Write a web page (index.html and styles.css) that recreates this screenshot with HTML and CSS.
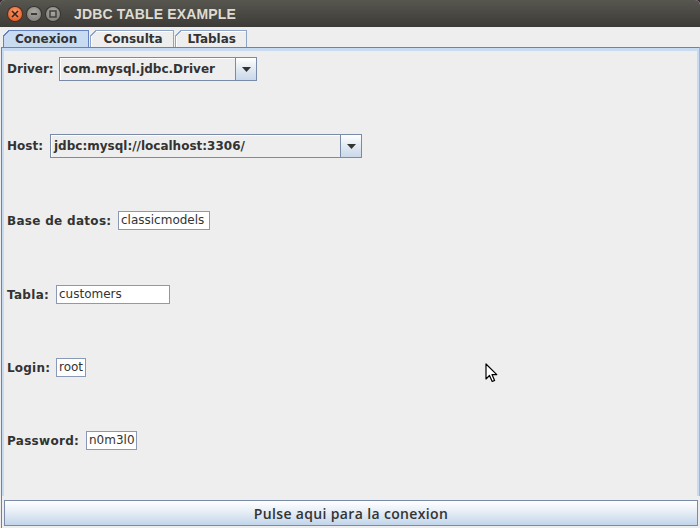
FILE: index.html
```html
<!DOCTYPE html>
<html>
<head>
<meta charset="utf-8">
<link rel="stylesheet" href="styles.css">
</head>
<body>
<div class="window">
  <div class="titlebar">
    <div class="wbtns">
      <span class="wbtn close"><svg width="8" height="8" viewBox="0 0 8 8"><path d="M1 1L7 7M7 1L1 7" stroke="#3a2418" stroke-width="1.6"/></svg></span>
      <span class="wbtn"><svg width="8" height="8" viewBox="0 0 8 8"><path d="M1 4H7" stroke="#3c3b37" stroke-width="1.8"/></svg></span>
      <span class="wbtn"><svg width="8" height="8" viewBox="0 0 8 8"><rect x="1" y="1" width="6" height="6" fill="none" stroke="#3c3b37" stroke-width="1.4"/></svg></span>
    </div>
    <div class="title">JDBC TABLE EXAMPLE</div>
  </div>
  <div class="tabs">
    <div class="tab selected">Conexion</div>
    <div class="tab">Consulta</div>
    <div class="tab">LTablas</div>
  </div>
  <div class="panel">
    <div class="panel-inner">
      <div class="row r1">
        <span class="label l-driver">Driver:</span>
        <div class="combo combo-driver"><span class="combo-text">com.mysql.jdbc.Driver</span><span class="combo-arrow"><svg width="9" height="5" viewBox="0 0 9 5"><path d="M0 0H9L4.5 5Z" fill="#333"/></svg></span></div>
      </div>
      <div class="row r2">
        <span class="label l-host">Host:</span>
        <div class="combo combo-host"><span class="combo-text">jdbc:mysql://localhost:3306/</span><span class="combo-arrow"><svg width="9" height="5" viewBox="0 0 9 5"><path d="M0 0H9L4.5 5Z" fill="#333"/></svg></span></div>
      </div>
      <div class="row r3">
        <span class="label l-base">Base de datos:</span>
        <span class="field f-base">classicmodels</span>
      </div>
      <div class="row r4">
        <span class="label l-tabla">Tabla:</span>
        <span class="field f-tabla">customers</span>
      </div>
      <div class="row r5">
        <span class="label l-login">Login:</span>
        <span class="field f-login">root</span>
      </div>
      <div class="row r6">
        <span class="label l-pass">Password:</span>
        <span class="field f-pass">n0m3l0</span>
      </div>
    </div>
  </div>
  <div class="btn-wrap">
    <div class="button">Pulse aqui para la conexion</div>
  </div>
  <svg class="cursor" width="13" height="20" viewBox="0 0 13 20"><path d="M1 1V16L4.5 12.5L7.2 18.5L9.6 17.4L7 11.6H11.8Z" fill="#fff" stroke="#000" stroke-width="1.2" stroke-linejoin="round"/></svg>
</div>
</body>
</html>
```
FILE: styles.css
```css
html, body {
  margin: 0;
  padding: 0;
  background: #3a2a35;
}
.window {
  position: relative;
  width: 700px;
  height: 528px;
  display: flex;
  flex-direction: column;
  background: #eeeeee;
  border-radius: 5px 5px 0 0;
  overflow: hidden;
  font-family: "DejaVu Sans", sans-serif;
  font-size: 12px;
  color: #333333;
}
.titlebar {
  height: 27px;
  flex: none;
  display: flex;
  align-items: center;
  background: linear-gradient(#57564f, #3c3b37);
}
.wbtns {
  display: flex;
  gap: 5px;
  padding-left: 8px;
  padding-top: 1px;
}
.wbtn {
  width: 14px;
  height: 14px;
  border-radius: 50%;
  display: flex;
  align-items: center;
  justify-content: center;
  background: radial-gradient(circle at 50% 35%, #a9a7a0, #7a7872);
  box-shadow: 0 0 0 1px #34332f;
}
.wbtn.close {
  background: radial-gradient(circle at 50% 35%, #f79a6b, #e2521d);
  box-shadow: 0 0 0 1px #5a2a14;
}
.title {
  margin-left: 14px;
  font-family: "Liberation Sans", sans-serif;
  font-weight: bold;
  font-size: 14px;
  letter-spacing: 0.15px;
  color: #dfdbd2;
  padding-top: 1px;
}
.tabs {
  height: 17px;
  flex: none;
  margin-top: 3px;
  display: flex;
  padding-left: 3px;
  gap: 1px;
}
.tab {
  position: relative;
  height: 17px;
  box-sizing: border-box;
  border: 1px solid #8ea5ca;
  border-bottom: none;
  padding: 0 10px 0 12px;
  font-weight: bold;
  font-size: 12px;
  line-height: 17px;
  color: #333;
  background: #eeeeee;
  box-shadow: inset 1px 1px 0 #ffffff;
}
.tab::before {
  content: "";
  position: absolute;
  left: -1px;
  top: -1px;
  width: 6px;
  height: 6px;
  background: linear-gradient(135deg, #eeeeee 45%, #8ea5ca 45%, #8ea5ca 62%, transparent 62%);
}
.tab.selected {
  background: #c8dbf0;
  border-color: #6382bf;
  box-shadow: none;
  padding: 0 11px 0 11px;
}
.tab.selected::before {
  background: linear-gradient(135deg, #eeeeee 45%, #6382bf 45%, #6382bf 62%, transparent 62%);
}
.panel {
  flex: 1;
  border-top: 1px solid #6382bf;
  border-left: 1px solid #6382bf;
  border-right: 1px solid #9fb5d6;
  margin-left: 1px;
  background: #c8dbf0;
  padding: 3px 2px 0 2px;
  display: flex;
}
.panel-inner {
  flex: 1;
  background: #eeeeee;
  display: flex;
  flex-direction: column;
  padding-left: 3px;
}
.row {
  display: flex;
  align-items: center;
  gap: 5px;
}
.r1 { margin-top: 6px; }
.r2 { margin-top: 53px; }
.r3 { margin-top: 53px; }
.r4 { margin-top: 55px; }
.r5 { margin-top: 54px; }
.r6 { margin-top: 54px; }
.label {
  font-weight: bold;
  font-size: 12px;
  color: #333;
  white-space: nowrap;
}
.l-driver { width: 47px; }
.l-host { width: 38px; }
.l-base { width: 106px; letter-spacing: 0.3px; }
.l-tabla { width: 44px; letter-spacing: 0.3px; }
.l-login { width: 44px; letter-spacing: 0.2px; }
.l-pass { width: 74px; letter-spacing: 0.3px; }
.combo {
  display: flex;
  height: 24px;
  box-sizing: border-box;
  border: 1px solid #7a8aa9;
  background: #eeeeee;
}
.combo-driver { width: 198px; }
.combo-host { width: 312px; }
.combo-text {
  flex: 1;
  display: flex;
  align-items: center;
  padding-left: 3px;
  font-weight: bold;
  font-size: 12px;
  box-shadow: inset 1px 1px 0 #ffffff;
}
.combo-arrow {
  width: 20px;
  border-left: 1px solid #7a8aa9;
  display: flex;
  align-items: center;
  justify-content: center;
  background: linear-gradient(#ffffff, #dfe7f1 55%, #c9d8ea);
}
.field {
  height: 19px;
  box-sizing: border-box;
  border: 1px solid #8a9ab6;
  background: #ffffff;
  padding-left: 2px;
  font-size: 12px;
  line-height: 17px;
  color: #333;
  overflow: hidden;
  white-space: nowrap;
}
.f-base { width: 92px; }
.f-tabla { width: 114px; }
.f-login { width: 30px; }
.f-pass { width: 51px; }
.btn-wrap {
  flex: none;
  padding: 4px 2px 2px 2px;
  background: #eeeeee;
  border-left: 1px solid #6382bf;
  margin-left: 1px;
}
.button {
  height: 26px;
  box-sizing: border-box;
  border: 1px solid #7a8aa9;
  background: linear-gradient(#ffffff, #e7eef6 45%, #c2d5ea);
  display: flex;
  align-items: center;
  justify-content: center;
  font-family: "Open Sans", sans-serif;
  font-weight: 600;
  font-size: 14px;
  letter-spacing: 0.35px;
  color: #333;
}
.cursor {
  position: absolute;
  left: 485px;
  top: 363px;
}
```
